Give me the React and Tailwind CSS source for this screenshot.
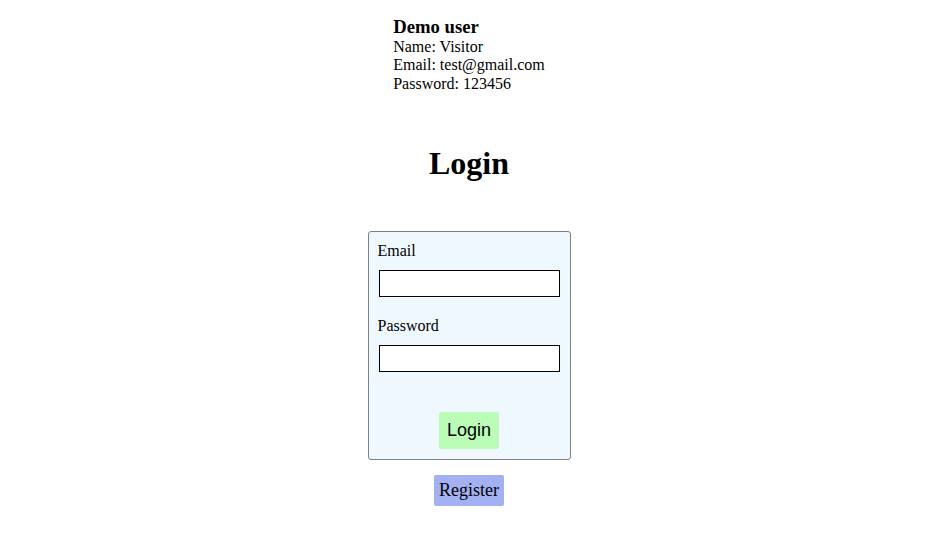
const App = () => {
    return (
        <div className="min-h-screen bg-white text-black font-['Liberation_Serif',serif] text-base">
            <div className="w-[938px] flex flex-col items-center pt-[17px]">
                {/* Demo credentials */}
                <div className="leading-[18.4px]">
                    <div className="text-[18.72px] font-bold leading-[20.7px]">Demo user</div>
                    <div>Name: Visitor</div>
                    <div>Email: test@gmail.com</div>
                    <div>Password: 123456</div>
                </div>

                <h1 className="text-[32px] font-bold leading-[37px] mt-[52px]">Login</h1>

                {/* Login form */}
                <form
                    className="mt-[49px] w-[203px] bg-[#f0f8ff] border border-[#808080] rounded-[3px] px-[10px] pt-[10px] pb-[10px] flex flex-col"
                    onSubmit={(e) => e.preventDefault()}
                >
                    <label className="leading-[18.4px] -ml-px">Email</label>
                    <input type="email" className="mt-[10px] h-[27px] w-[181px] bg-white border border-black outline-none" />
                    <label className="mt-[20px] leading-[18.4px] -ml-px">Password</label>
                    <input type="password" className="mt-[9px] h-[27px] w-[181px] bg-white border border-black outline-none" />
                    <div className="mt-[40px] flex justify-center">
                        <button type="submit" className="h-[37px] w-[60px] bg-[#bbfdb6] rounded-[2px] font-['Liberation_Sans',Arial,sans-serif] text-lg">
                            Login
                        </button>
                    </div>
                </form>

                <button className="mt-[15px] h-[31px] w-[70px] bg-[#a3b1f3] rounded-[2px] text-lg leading-[20px]">
                    Register
                </button>
            </div>
        </div>
    );
};

export default App;
